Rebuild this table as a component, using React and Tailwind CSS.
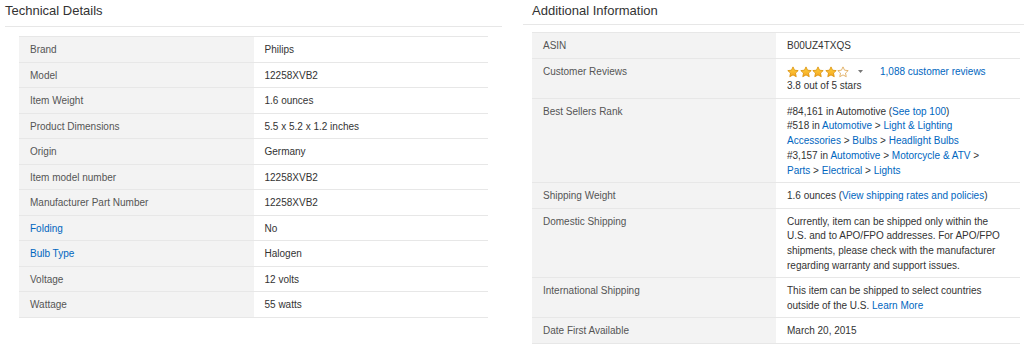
import React from "react";

const techDetails = [
  { label: "Brand", value: "Philips" },
  { label: "Model", value: "12258XVB2" },
  { label: "Item Weight", value: "1.6 ounces" },
  { label: "Product Dimensions", value: "5.5 x 5.2 x 1.2 inches" },
  { label: "Origin", value: "Germany" },
  { label: "Item model number", value: "12258XVB2" },
  { label: "Manufacturer Part Number", value: "12258XVB2" },
  { label: "Folding", value: "No", link: true },
  { label: "Bulb Type", value: "Halogen", link: true },
  { label: "Voltage", value: "12 volts" },
  { label: "Wattage", value: "55 watts" },
];

function A({ children }) {
  return <a href="#" className="text-[#0066c0]">{children}</a>;
}

function Star({ filled }) {
  return (
    <svg width="12" height="12" viewBox="0 0 24 24" className="block">
      <defs>
        <linearGradient id="gold" x1="0" y1="0" x2="0" y2="1">
          <stop offset="0" stopColor="#ffd23a" />
          <stop offset="1" stopColor="#f5a623" />
        </linearGradient>
      </defs>
      <path
        d="M12 1.8l3.1 6.6 7.3.8-5.4 5 1.5 7.2L12 17.8l-6.5 3.6L7 14.2l-5.4-5 7.3-.8z"
        fill={filled ? "url(#gold)" : "#fff"}
        stroke={filled ? "#d98e04" : "#dca24a"}
        strokeWidth="1.6"
        strokeLinejoin="round"
      />
    </svg>
  );
}

function Row({ label, children, link }) {
  return (
    <div className="flex border-t border-[#e7e7e7] leading-[14.7px]">
      <div className={"w-1/2 bg-[#f3f3f3] pl-[11px] pr-2 pt-[6px] pb-[3.8px] " + (link ? "text-[#0066c0]" : "text-[#555]")}>
        {label}
      </div>
      <div className="w-1/2 pl-[11px] pr-2 pt-[6px] pb-[3.8px] text-[#333]">{children}</div>
    </div>
  );
}

function Heading({ children, className }) {
  return (
    <div className={"border-b border-[#e7e7e7] pt-[3px] text-[13px] leading-[15px] text-[#333] " + className}>
      {children}
    </div>
  );
}

export default function App() {
  return (
    <div className="flex h-[352px] w-[1024px] overflow-hidden bg-white font-['Liberation_Sans',Arial,sans-serif] text-[10px]">
      <section className="ml-[5px] w-[497px]">
        <Heading className="pb-[8px]">Technical Details</Heading>
        <div className="mx-[14px] mt-[9px] border-b border-[#e7e7e7]">
          {techDetails.map((r) => (
            <Row key={r.label} label={r.label} link={r.link}>
              {r.value}
            </Row>
          ))}
        </div>
      </section>

      <section className="ml-[21px] w-[501px]">
        <Heading className="pb-[6px] pl-[9px]">Additional Information</Heading>
        <div className="ml-[9px] mr-[4px] mt-[7px] border-b border-[#e7e7e7]">
          <Row label="ASIN">B00UZ4TXQS</Row>
          <Row label="Customer Reviews">
            <div className="flex items-center">
              <div className="flex gap-[0.5px]">
                <Star filled />
                <Star filled />
                <Star filled />
                <Star filled />
                <Star />
              </div>
              <svg width="5" height="3" viewBox="0 0 5 3" className="ml-[9px]">
                <path d="M0 0h5L2.5 3z" fill="#777" />
              </svg>
              <span className="ml-[17px]">
                <A>1,088 customer reviews</A>
              </span>
            </div>
            <div>3.8 out of 5 stars</div>
          </Row>
          <Row label="Best Sellers Rank">
            #84,161 in Automotive (<A>See top 100</A>)
            <br />
            #518 in <A>Automotive</A> &gt; <A>Light &amp; Lighting</A>
            <br />
            <A>Accessories</A> &gt; <A>Bulbs</A> &gt; <A>Headlight Bulbs</A>
            <br />
            #3,157 in <A>Automotive</A> &gt; <A>Motorcycle &amp; ATV</A> &gt;
            <br />
            <A>Parts</A> &gt; <A>Electrical</A> &gt; <A>Lights</A>
          </Row>
          <Row label="Shipping Weight">
            1.6 ounces (<A>View shipping rates and policies</A>)
          </Row>
          <Row label="Domestic Shipping">
            Currently, item can be shipped only within the
            <br />
            U.S. and to APO/FPO addresses. For APO/FPO
            <br />
            shipments, please check with the manufacturer
            <br />
            regarding warranty and support issues.
          </Row>
          <Row label="International Shipping">
            This item can be shipped to select countries
            <br />
            outside of the U.S. <A>Learn More</A>
          </Row>
          <Row label="Date First Available">March 20, 2015</Row>
        </div>
      </section>
    </div>
  );
}
